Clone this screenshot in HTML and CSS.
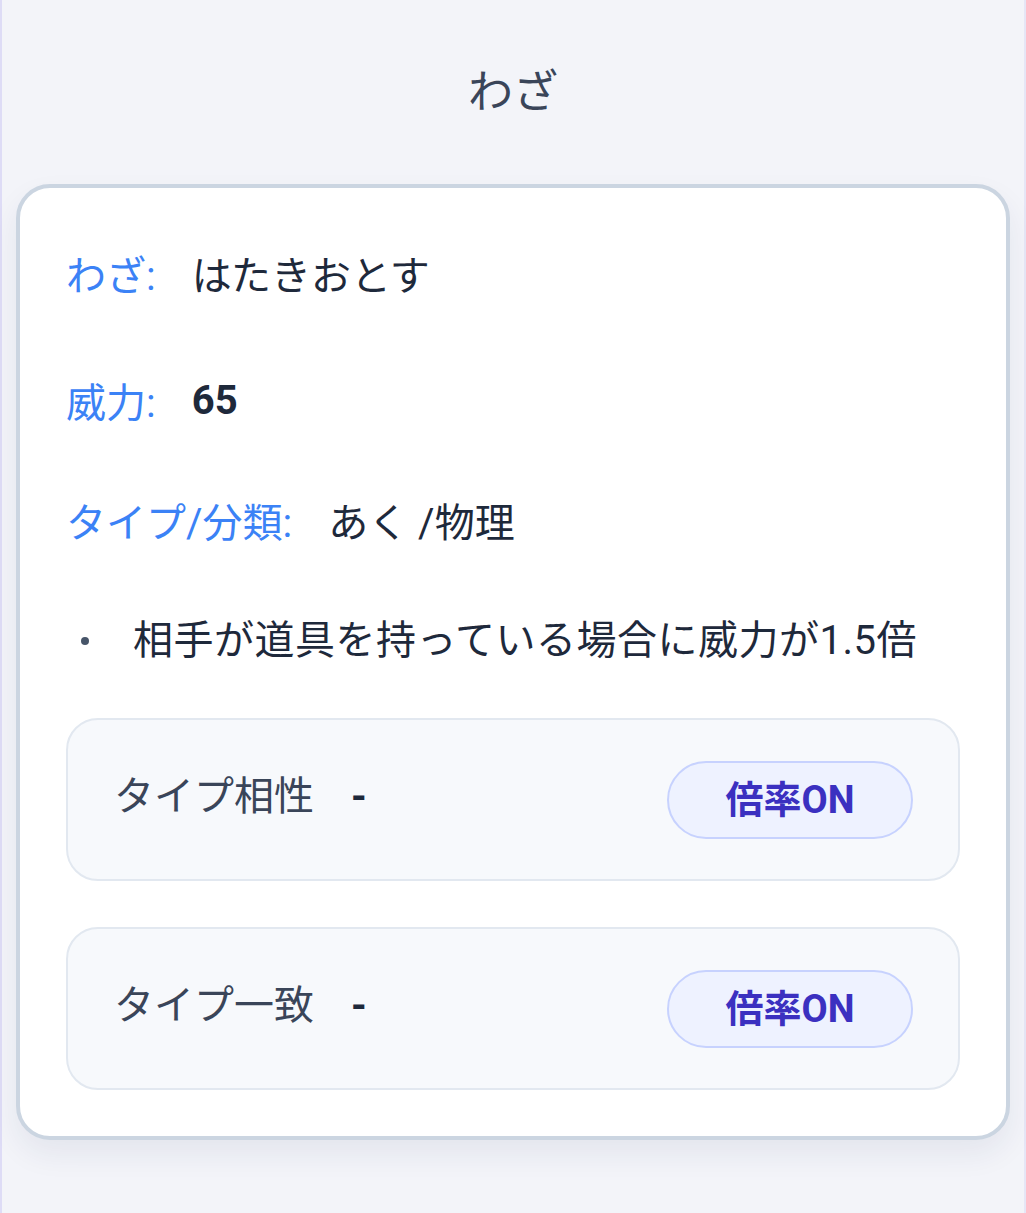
FILE: index.html
```html
<!DOCTYPE html>
<html lang="ja">
<head>
  <meta charset="UTF-8">
  <meta name="viewport" content="width=device-width, initial-scale=1.0">
  <title>わざ</title>
  <link rel="stylesheet" href="styles.css">
</head>
<body>
  <div class="page">
    <h1 class="page_title">わざ</h1>

    <div class="move_card">
      <div class="move_row row_name">
        <span class="move_label">わざ:</span>
        <span class="move_value">はたきおとす</span>
      </div>
      <div class="move_row row_power">
        <span class="move_label">威力:</span>
        <span class="move_value bold">65</span>
      </div>
      <div class="move_row row_type">
        <span class="move_label">タイプ/分類:</span>
        <span class="move_value">あく /物理</span>
      </div>

      <ul class="move_notes">
        <li>相手が道具を持っている場合に威力が1.5倍</li>
      </ul>

      <!-- 倍率の切り替え -->
      <div class="rate_box">
        <div class="rate_name">
          <span>タイプ相性</span>
          <span class="rate_dash">-</span>
        </div>
        <button class="rate_btn">倍率ON</button>
      </div>
      <div class="rate_box">
        <div class="rate_name">
          <span>タイプ一致</span>
          <span class="rate_dash">-</span>
        </div>
        <button class="rate_btn">倍率ON</button>
      </div>
    </div>
  </div>
</body>
</html>
```

FILE: styles.css
```css
*{
  margin: 0;
  padding: 0;
  box-sizing: border-box;
}
body {
  background-color: #f3f4f9;
  font-family: Roboto, "Noto Sans CJK JP", sans-serif;
  color: #1e293b;
}
.page {
  min-height: 1213px;
  padding: 0 16px 60px;
  border-left: 2px solid #dedcf6;
  border-right: 2px solid #e6e6f6;
}
.page_title {
  padding-top: 59px;
  margin-bottom: 57px;
  height: 127px;
  font-size: 45px;
  line-height: 68px;
  font-weight: 400;
  text-align: center;
  color: #3a4559;
}
.move_card {
  width: 994px;
  margin-left: -2px;
  padding: 50px 46px 46px;
  background-color: #fff;
  border: 4px solid #cbd5e1;
  border-radius: 34px;
  box-shadow: 0px 14px 30px rgba(30, 41, 80, .07);
}
.move_row {
  display: flex;
  align-items: center;
  height: 70px;
  font-size: 40px;
}
.row_name {
  margin-bottom: 57px;
}
.row_power {
  margin-bottom: 50px;
}
.row_type {
  margin-bottom: 51px;
}
.move_label {
  color: #3b82f6;
  margin-right: 36px;
}
.move_value {
  color: #1e293b;
}
.bold {
  font-weight: 700;
}
.move_notes {
  list-style: none;
  font-size: 40px;
  line-height: 70px;
  letter-spacing: 0.5px;
  margin-bottom: 42px;
  color: #1e293b;
}
.move_notes li {
  display: flex;
  align-items: center;
}
.move_notes li::before {
  content: "";
  width: 8px;
  height: 8px;
  border-radius: 50%;
  background-color: #475569;
  margin: 0 44px 0 15px;
}
.rate_box {
  display: flex;
  align-items: center;
  justify-content: space-between;
  height: 163px;
  padding: 0 45px 0 46px;
  background-color: #f7f9fc;
  border: 2px solid #e2e8f0;
  border-radius: 32px;
}
.rate_box + .rate_box {
  margin-top: 46px;
}
.rate_name {
  display: flex;
  align-items: center;
  gap: 37px;
  font-size: 40px;
  line-height: 60px;
  padding-bottom: 6px;
  color: #3a4559;
}
.rate_dash {
  font-weight: 700;
  color: #1e293b;
}
.rate_btn {
  width: 246px;
  height: 78px;
  padding-bottom: 6px;
  font-family: Roboto, "Noto Sans CJK JP", sans-serif;
  font-size: 38px;
  font-weight: 700;
  color: #3b30c0;
  background-color: #eef2ff;
  border: 2px solid #c7d2fe;
  border-radius: 39px;
  cursor: pointer;
}
```
